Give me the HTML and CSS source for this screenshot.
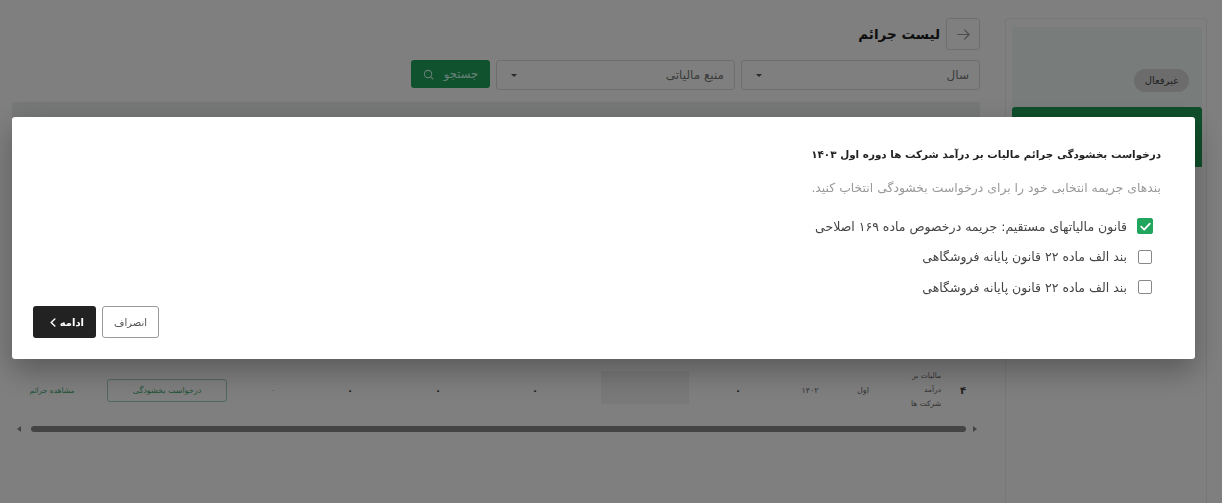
FILE: index.html
```html
<!DOCTYPE html>
<html lang="fa" dir="rtl">
<head>
    <meta charset="UTF-8">
    <meta name="viewport" content="width=device-width, initial-scale=1.0">
    <title>لیست جرائم</title>
    <link rel="stylesheet" href="styles.css">
</head>
<body>
    <div class="page">
        <aside class="sidebar">
            <div class="sidebar-head">
                <span class="badge">غیرفعال</span>
            </div>
            <div class="sidebar-green"></div>
        </aside>

        <main class="content">
            <div class="title-row">
                <button class="back-btn" aria-label="بازگشت">
                    <svg width="15" height="15" viewBox="0 0 16 16" fill="none" stroke="currentColor" stroke-width="1.2" stroke-linecap="round" stroke-linejoin="round">
                        <path d="M2 8h12M9 3l5 5-5 5"/>
                    </svg>
                </button>
                <h1>لیست جرائم</h1>
            </div>

            <div class="filters">
                <div class="select select-year"><span>سال</span><i class="caret"></i></div>
                <div class="select select-source"><span>منبع مالیاتی</span><i class="caret"></i></div>
                <button class="search-btn">
                    جستجو
                    <svg width="11" height="11" viewBox="0 0 12 12" fill="none" stroke="currentColor" stroke-width="1.1" stroke-linecap="round">
                        <circle cx="5.5" cy="5.5" r="4"/>
                        <path d="M8.5 8.5l2.5 2.5"/>
                    </svg>
                </button>
            </div>

            <div class="table-head"></div>
            <div class="table-spacer"></div>

            <div class="table-row">
                <span class="cell cell-index">۴</span>
                <span class="cell cell-subject">مالیات بر<br>درآمد<br>شرکت ها</span>
                <span class="cell">اول</span>
                <span class="cell">۱۴۰۲</span>
                <span class="cell cell-zero">۰</span>
                <span class="cell"><span class="blank-box"></span></span>
                <span class="cell cell-zero">۰</span>
                <span class="cell cell-zero">۰</span>
                <span class="cell cell-zero">۰</span>
                <span class="cell cell-faded">۰</span>
                <span class="cell"><button class="request-btn">درخواست بخشودگی</button></span>
                <span class="cell cell-link">مشاهده جرائم</span>
            </div>

            <div class="scroll-track">
                <i class="arrow arrow-right"></i>
                <div class="scroll-thumb"></div>
                <i class="arrow arrow-left"></i>
            </div>
        </main>
    </div>

    <div class="overlay">
        <div class="modal">
            <h2>درخواست بخشودگی جرائم مالیات بر درآمد شرکت ها دوره اول ۱۴۰۳</h2>
            <p class="hint">بندهای جریمه انتخابی خود را برای درخواست بخشودگی انتخاب کنید.</p>

            <div class="options">
                <label class="option">
                    <span class="check checked">
                        <svg width="11" height="9" viewBox="0 0 11 9" fill="none" stroke="#fff" stroke-width="1.8" stroke-linecap="round" stroke-linejoin="round">
                            <path d="M1.2 4.6l3 3 5.6-6"/>
                        </svg>
                    </span>
                    قانون مالیاتهای مستقیم: جریمه درخصوص ماده ۱۶۹ اصلاحی
                </label>
                <label class="option">
                    <span class="check"></span>
                    بند الف ماده ۲۲ قانون پایانه فروشگاهی
                </label>
                <label class="option">
                    <span class="check"></span>
                    بند الف ماده ۲۲ قانون پایانه فروشگاهی
                </label>
            </div>

            <div class="modal-actions">
                <button class="cancel-btn">انصراف</button>
                <button class="next-btn">
                    ادامه
                    <svg width="6" height="9" viewBox="0 0 6 9" fill="none" stroke="currentColor" stroke-width="1.5" stroke-linecap="round" stroke-linejoin="round">
                        <path d="M4.8 1L1.2 4.5l3.6 3.5"/>
                    </svg>
                </button>
            </div>
        </div>
    </div>
</body>
</html>
```

FILE: styles.css
```css
* {
    box-sizing: border-box;
}
body {
    margin: 0;
    height: 503px;
    overflow: hidden;
    background-color: #fff;
    color: #222;
    font-family: "DejaVu Sans", "Noto Sans", sans-serif;
}
button {
    font-family: inherit;
    cursor: pointer;
}

/* page under the dialog */
.page {
    display: flex;
    align-items: flex-start;
    height: 503px;
    padding: 18px 15px 0 0;
}
.sidebar {
    flex: 0 0 202px;
    height: 485px;
    padding: 8px 4px 0 6px;
    border: 1px solid #eee;
    border-bottom: none;
    border-radius: 4px 4px 0 0;
}
.sidebar-head {
    display: flex;
    align-items: flex-end;
    height: 80px;
    padding: 0 13px 15px;
    background-color: #f1f8f4;
}
.badge {
    width: 55px;
    padding: 5px 0;
    border-radius: 12px;
    background-color: #d8d8d8;
    color: #444;
    font-size: 10px;
    line-height: 13px;
    text-align: center;
}
.sidebar-green {
    height: 60px;
    border-radius: 3px 3px 0 0;
    background-color: #1f9d55;
}
.content {
    flex: 0 0 965px;
    margin-right: 25px;
}
.title-row {
    display: flex;
    align-items: center;
    gap: 6px;
    height: 32px;
}
.back-btn {
    display: flex;
    align-items: center;
    justify-content: center;
    width: 34px;
    height: 32px;
    padding: 0;
    border: 1px solid #ddd;
    border-radius: 3px;
    background: none;
    color: #999;
}
h1 {
    margin: 0;
    font-size: 13.5px;
    color: #1c1c1c;
}
.filters {
    display: flex;
    gap: 6px;
    margin-top: 10px;
}
.select {
    display: flex;
    align-items: center;
    justify-content: space-between;
    width: 239px;
    height: 30px;
    padding: 0 10px 0 12px;
    border: 1px solid #ddd;
    border-radius: 3px;
    color: #777;
    font-size: 12px;
}
.caret {
    width: 0;
    height: 0;
    margin-left: 2px;
    border-style: solid;
    border-width: 3px 3px 0;
    border-color: #555 transparent transparent;
}
.search-btn {
    display: flex;
    align-items: center;
    justify-content: space-between;
    width: 79px;
    height: 28px;
    padding: 0 12px;
    border: none;
    border-radius: 3px;
    background-color: #22a55c;
    color: #cfe;
    font-size: 11.5px;
}
.table-head {
    height: 40px;
    margin-top: 12px;
    margin-left: -3px;
    background-color: #eaf0ed;
}
.table-spacer {
    height: 227px;
}

/* last row of the table, below the dialog */
.table-row {
    display: grid;
    grid-template-columns: 34px 56px 54px 52px 92px 94px 126px 68px 108px 46px 166px 64px;
    align-items: center;
    height: 40px;
    font-size: 8px;
    color: #666;
}
.cell {
    display: flex;
    justify-content: center;
}
.cell-index {
    font-size: 10px;
    font-weight: bold;
    color: #444;
}
.cell-subject {
    display: block;
    padding-right: 5px;
    line-height: 14px;
    font-size: 7.5px;
}
.cell-zero {
    font-size: 10px;
    font-weight: bold;
    color: #444;
}
.cell-faded {
    color: #aaa;
}
.cell-link {
    color: #3aa56c;
    font-size: 7.5px;
    white-space: nowrap;
}
.blank-box {
    width: 88px;
    height: 33px;
    margin-bottom: 5px;
    background-color: #f2f2f2;
}
.request-btn {
    width: 120px;
    height: 23px;
    padding: 0;
    border: 1px solid #9fd0b4;
    border-radius: 3px;
    background: none;
    color: #3aa56c;
    font-size: 8px;
}
.scroll-track {
    display: flex;
    align-items: center;
    height: 8px;
    margin-top: 16px;
    padding: 0 3px 0 2px;
}
.scroll-thumb {
    flex: 1;
    height: 6px;
    margin: 0 7px 0 10px;
    border-radius: 3px;
    background-color: #888;
}
.arrow {
    width: 0;
    height: 0;
    border-style: solid;
    border-width: 3px 0;
    border-color: transparent;
}
.arrow-right {
    border-left: 4px solid #888;
}
.arrow-left {
    border-right: 4px solid #888;
}

/* dialog */
.overlay {
    position: fixed;
    inset: 0;
    background-color: rgba(0, 0, 0, 0.5);
    backdrop-filter: blur(0.7px);
}
.modal {
    position: absolute;
    top: 117px;
    left: 12px;
    display: flex;
    flex-direction: column;
    width: 1183px;
    height: 242px;
    padding: 30px 34px 21px 21px;
    border-radius: 3px;
    background-color: #fff;
    box-shadow: 0 12px 30px rgba(0, 0, 0, 0.3);
}
h2 {
    margin: 0;
    font-size: 10.4px;
    line-height: 15px;
    color: #222;
}
.hint {
    margin: 18px 0 0;
    font-size: 12.4px;
    line-height: 15px;
    color: #999;
}
.options {
    display: flex;
    flex-direction: column;
    gap: 12.5px;
    margin-top: 22px;
}
.option {
    display: flex;
    align-items: center;
    gap: 11px;
    height: 18px;
    font-size: 12.5px;
    color: #444;
}
.check {
    display: flex;
    align-items: center;
    justify-content: center;
    width: 14px;
    height: 14px;
    margin-right: 9px;
    border: 1.5px solid #888;
    border-radius: 2px;
}
.check.checked {
    width: 16px;
    height: 16px;
    margin-right: 8px;
    margin-left: -1px;
    border-color: #22a55c;
    background-color: #22a55c;
}
.modal-actions {
    display: flex;
    gap: 6px;
    justify-content: flex-end;
    margin-top: auto;
}
.cancel-btn {
    width: 57px;
    height: 32px;
    padding: 0;
    border: 1px solid #999;
    border-radius: 3px;
    background: #fff;
    color: #555;
    font-size: 10px;
}
.next-btn {
    display: flex;
    align-items: center;
    gap: 4px;
    width: 63px;
    height: 32px;
    padding: 0 12px 0 0;
    border: none;
    border-radius: 3px;
    background-color: #222;
    color: #fff;
    font-size: 10px;
    font-weight: bold;
}
```
